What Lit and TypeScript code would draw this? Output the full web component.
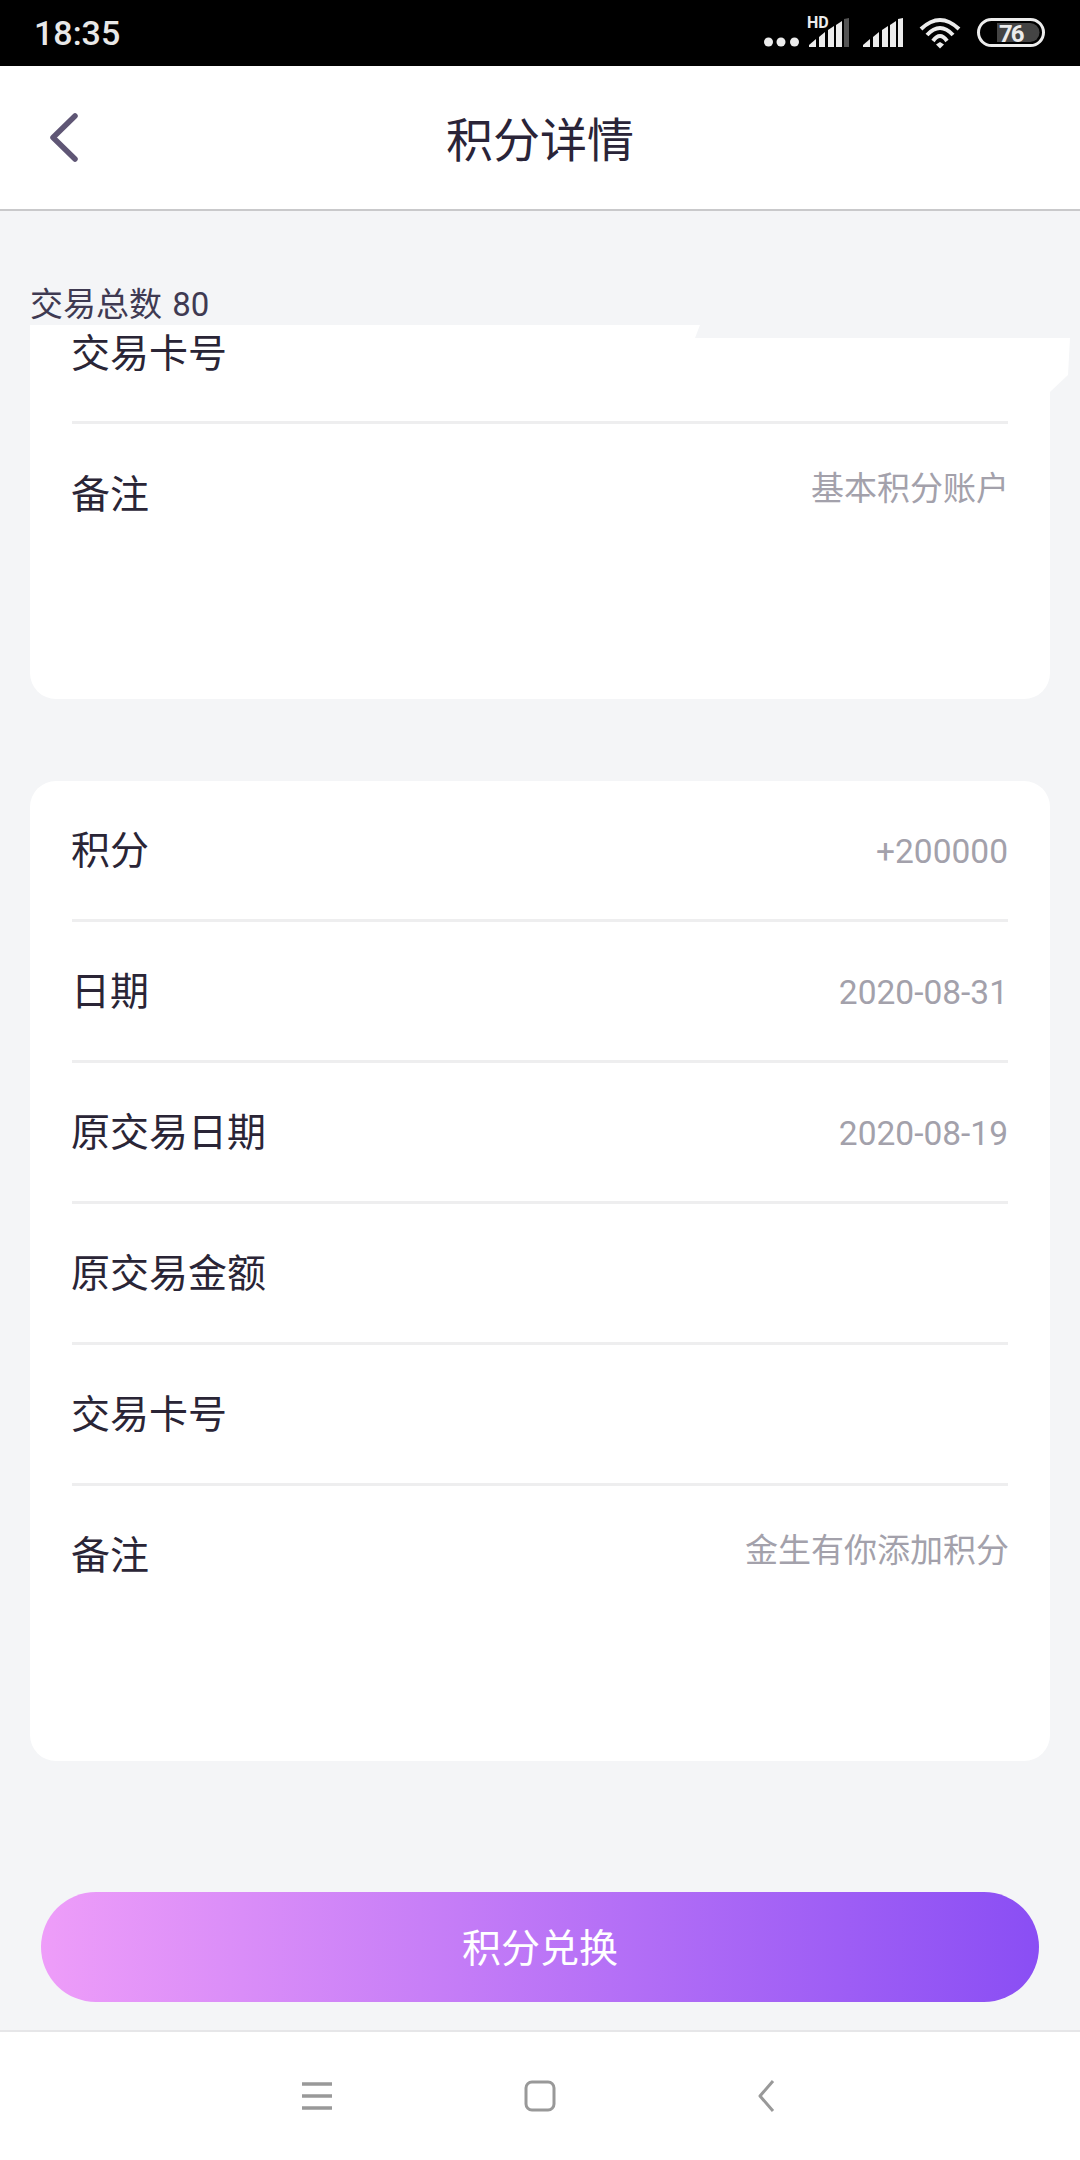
import { html, css, LitElement, svg } from 'lit';
import { customElement } from 'lit/decorators.js';

interface Row {
    label: string;
    value?: string;
    note?: boolean;
}

const detailRows: Row[] = [
    { label: '积分', value: '+200000' },
    { label: '日期', value: '2020-08-31' },
    { label: '原交易日期', value: '2020-08-19' },
    { label: '原交易金额' },
    { label: '交易卡号' },
    { label: '备注', value: '金生有你添加积分', note: true },
];

// five rising bars, 29px tall, drawn from the top left of the group
const signalBars = (lastColor: string) => svg`
    <path d="M0 29 V27 L7 21 V29 Z" fill="#ececec" />
    <path d="M10 29 V19 L16 14 V29 Z" fill="#ececec" />
    <path d="M19 29 V12 L25 8 V29 Z" fill="#ececec" />
    <path d="M27 29 V7 L33 3 V29 Z" fill="#ececec" />
    <path d="M35 29 V1 L40 0 V29 Z" fill=${lastColor} />
`;

@customElement('app-root')
export class AppRoot extends LitElement {
    static styles = css`
        :host {
            display: block;
            width: 1080px;
            height: 2160px;
            overflow: hidden;
            background: #f4f5f7;
            font-family: 'Roboto', 'Noto Sans CJK SC', sans-serif;
        }
        .status {
            height: 66px;
            background: #000;
            color: #e8e8e8;
            display: flex;
            align-items: center;
            padding: 0 35px 0 34px;
            box-sizing: border-box;
            font-size: 34px;
            font-weight: 500;
        }
        .status-icons {
            margin-left: auto;
            display: block;
        }
        .header {
            height: 145px;
            box-sizing: border-box;
            background: #fff;
            border-bottom: 2px solid #c9c9cb;
            display: flex;
            align-items: center;
            justify-content: center;
            position: relative;
        }
        .header h1 {
            margin: 0 0 2px;
            font-size: 47px;
            font-weight: 400;
            color: #2a2438;
        }
        .back {
            position: absolute;
            left: 47px;
            top: 45px;
        }
        .total {
            height: 114px;
            box-sizing: border-box;
            padding: 74px 0 0 30px;
            font-size: 33px;
            word-spacing: 2px;
            line-height: 40px;
            color: #3f3a52;
        }
        .card {
            margin: 0 30px;
            background: #fff;
            border-radius: 0 0 26px 26px;
            padding: 0 42px 134px;
            position: relative;
        }
        .card.full {
            border-radius: 26px;
            margin-top: 82px;
        }
        .row {
            height: 141px;
            box-sizing: border-box;
            display: flex;
            align-items: center;
            justify-content: space-between;
            border-bottom: 3px solid #eeeeef;
        }
        .row:last-child {
            border-bottom: none;
        }
        .row.cut {
            height: 99px;
            align-items: flex-start;
        }
        .label {
            font-size: 39px;
            line-height: 58px;
            color: #2a2536;
            margin: 2px 0 0 -1px;
        }
        .row.cut .label {
            margin-top: 0;
        }
        .row:last-child .label {
            margin-top: 0;
        }
        .card.full .row:last-child .label {
            margin-bottom: 2px;
        }
        .value {
            font-size: 33.5px;
            color: #a3a1ab;
            margin-top: 2px;
        }
        .value.note {
            font-size: 33px;
            margin: 0 -1px 18px 0;
        }
        .patch {
            position: absolute;
            left: 665px;
            top: 0;
            display: block;
        }
        .exchange {
            margin: 131px 0 0 41px;
            width: 998px;
            height: 110px;
            box-sizing: border-box;
            padding-bottom: 4px;
            border-radius: 55px;
            background: linear-gradient(90deg, #ee9df9, #8a4ef4);
            color: #fff;
            font-size: 39px;
            display: flex;
            align-items: center;
            justify-content: center;
        }
        .nav {
            margin-top: 28px;
            height: 130px;
            box-sizing: border-box;
            border-top: 2px solid #e6e6e8;
            background: #fff;
            display: flex;
            align-items: center;
            gap: 191px;
            padding-left: 301px;
        }
        .nav svg {
            display: block;
        }
        .nav .nav-back {
            margin-left: 9px;
        }
    `;

    renderRow(row: Row) {
        return html`
            <div class="row">
                <span class="label">${row.label}</span>
                ${row.value
                    ? html`<span class="value ${row.note ? 'note' : ''}">${row.value}</span>`
                    : ''}
            </div>
        `;
    }

    render() {
        return html`
            <div class="status">
                18:35
                <svg class="status-icons" width="285" height="46" viewBox="0 -6 285 46">
                    <circle cx="8.5" cy="26" r="4.5" fill="#ececec" />
                    <circle cx="21" cy="26" r="4.5" fill="#ececec" />
                    <circle cx="34.5" cy="26" r="4.5" fill="#ececec" />
                    <text x="47" y="12" font-family="Roboto" font-size="16" font-weight="700" fill="#ececec">HD</text>
                    <g transform="translate(49 2)">${signalBars('#555')}</g>
                    <g transform="translate(103 2)">${signalBars('#ececec')}</g>
                    <g fill="none" stroke="#ececec" stroke-width="4">
                        <path d="M161 13 Q180 -5 199 13" />
                        <path d="M167 19 Q180 5 193 19" />
                        <path d="M173 25 Q180 15 187 25" />
                    </g>
                    <path d="M176 28.5 L180 26 L184 28.5 L180 32.5 Z" fill="#ececec" />
                    <rect x="218.5" y="3.5" width="65" height="26" rx="13" fill="none" stroke="#ececec" stroke-width="3" />
                    <path d="M237 7 H270 A9.5 9.5 0 0 1 270 26 H237 Z" fill="#444" />
                    <text x="239" y="26" font-family="Roboto" font-size="24" font-weight="700" letter-spacing="-2" fill="#ececec">76</text>
                </svg>
            </div>
            <div class="header">
                <svg class="back" width="34" height="56" viewBox="0 0 34 56">
                    <path d="M28 5 L6 26.5 L28 48" fill="none" stroke="#5f5675" stroke-width="5.5" stroke-linecap="round" stroke-linejoin="round" />
                </svg>
                <h1>积分详情</h1>
            </div>
            <div class="total">交易总数 80</div>
            <div class="card">
                <svg class="patch" width="375" height="68" viewBox="0 0 375 68">
                    <path d="M5 0 L0 13 H355 V0 Z" fill="#f4f5f7" />
                    <path d="M355 13 H375 L373 50 L355 67 Z" fill="#fff" />
                </svg>
                <div class="row cut"><span class="label">交易卡号</span></div>
                <div class="row">
                    <span class="label">备注</span>
                    <span class="value note">基本积分账户</span>
                </div>
            </div>
            <div class="card full">${detailRows.map((row) => this.renderRow(row))}</div>
            <div class="exchange">积分兑换</div>
            <div class="nav">
                <svg width="32" height="30" viewBox="0 0 32 30">
                    <path d="M1 3 H31 M1 15 H31 M1 27 H31" stroke="#999" stroke-width="3.5" />
                </svg>
                <svg width="32" height="32" viewBox="0 0 32 32">
                    <rect x="2" y="2" width="28" height="28" rx="6" fill="none" stroke="#999" stroke-width="3" />
                </svg>
                <svg class="nav-back" width="20" height="34" viewBox="0 0 20 34">
                    <path d="M17 2 L4 17 L17 32" fill="none" stroke="#999" stroke-width="3" stroke-linejoin="round" />
                </svg>
            </div>
        `;
    }
}
